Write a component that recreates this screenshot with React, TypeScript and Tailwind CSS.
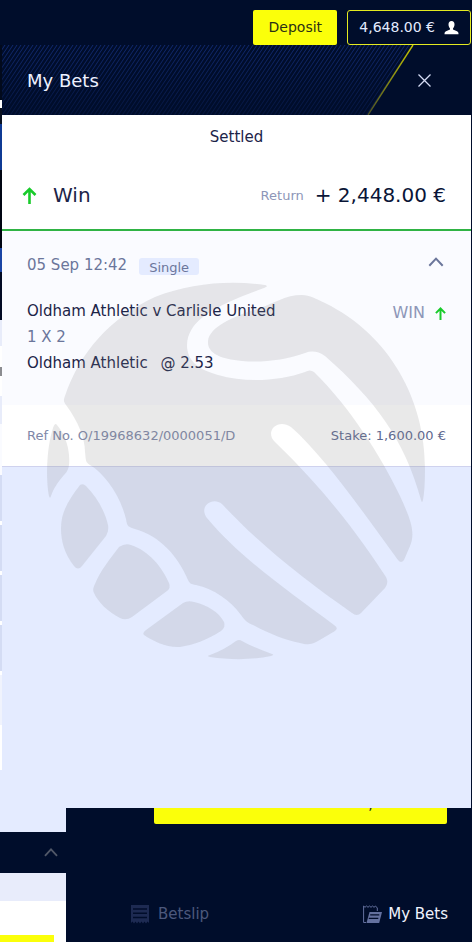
import { ReactNode } from 'react'

interface StripBlock {
  height: string
  color: string
}

// Page content that peeks out left of the drawer
const STRIP_BLOCKS: StripBlock[] = [
  { height: 'h-[55px]', color: 'bg-[#020a1c]' },
  { height: 'h-[8px]', color: 'bg-white' },
  { height: 'h-[16px]', color: 'bg-[#0b1220]' },
  { height: 'h-[46px]', color: 'bg-[#0f3a94]' },
  { height: 'h-[78px]', color: 'bg-[#000512]' },
  { height: 'h-[24px]', color: 'bg-[#1a45a5]' },
  { height: 'h-[48px]', color: 'bg-[#020a24]' },
  { height: 'h-[26px]', color: 'bg-[#e8ecfa]' },
  { height: 'h-[21px]', color: 'bg-white' },
  { height: 'h-[9px]', color: 'bg-[#8b8c90]' },
  { height: 'h-[20px]', color: 'bg-white' },
  { height: 'h-[28px]', color: 'bg-[#e8ecfa]' },
  { height: 'h-[51px]', color: 'bg-[#fafbff]' },
  { height: 'h-[50px]', color: 'border-b-4 border-white bg-[#d4dcf4]' },
  { height: 'h-[50px]', color: 'border-b-4 border-white bg-[#d4dcf4]' },
  { height: 'h-[50px]', color: 'border-b-4 border-white bg-[#d4dcf4]' },
  { height: 'h-[50px]', color: 'border-b-4 border-white bg-[#d4dcf4]' },
  { height: 'h-[50px]', color: 'bg-[#f0f3fd]' },
  { height: 'h-[45px]', color: 'bg-white' },
]

function UserIcon() {
  return (
    <svg viewBox="0 0 14 14" className="h-[14px] w-[15px]" fill="#fff" aria-hidden="true">
      <path d="M7 0C5 0 4 1.400 4 3.500C4 5.300 4.800 6.700 5.500 7.400V8.600L1.500 10.300C.5 10.800 0 11.600 0 13.200H14C14 11.600 13.500 10.800 12.500 10.300L8.500 8.600V7.400C9.200 6.700 10 5.300 10 3.500C10 1.400 9 0 7 0Z" />
    </svg>
  )
}

function UpArrow({ className }: { className: string }) {
  return (
    <svg viewBox="0 0 14 17" className={className} fill="none" stroke="#19cb2b" strokeWidth="2.6" aria-hidden="true">
      <path d="M7 17V2M1 8L7 2L13 8" />
    </svg>
  )
}

function Chevron({ className }: { className: string }) {
  return (
    <svg viewBox="0 0 15 10" className={className} fill="none" stroke="currentColor" strokeWidth="2" aria-hidden="true">
      <path d="M.8 8.800L7.500 1.600L14.200 8.800" />
    </svg>
  )
}

function BetslipIcon() {
  return (
    <svg viewBox="0 0 18 19" className="h-[19px] w-[18px]" aria-hidden="true">
      <path d="M0 0H18V18L16.500 16.500L15 18.500L13.500 16.500L12 18.500L10.500 16.500L9 18.500L7.500 16.500L6 18.500L4.500 16.500L3 18.500L1.500 16.500L0 18Z" fill="#1d2a52" />
      <path d="M2 4H16M2 8.300H16M2 12.600H16" stroke="#000d2b" strokeWidth="1.5" />
    </svg>
  )
}

function MyBetsIcon() {
  return (
    <svg viewBox="0 0 19 19" className="h-[19px] w-[19px]" fill="none" stroke="#64719f" aria-hidden="true">
      <path d="M3 17.500H.6V1L2 2.300L3.500 1L5 2.300L6.500 1L8 2.300L9.500 1L11 2.300L12.500 1L14.300 3V6" />
      <path d="M6.500 7H19L16.200 18H3.500Z" fill="#64719f" stroke="none" />
      <path d="M7.200 9.800H16.300M5.800 13.300H15.300" stroke="#000d2b" strokeWidth="1.3" />
    </svg>
  )
}

function Watermark() {
  return (
    <svg
      viewBox="46 281 380 380"
      className="pointer-events-none absolute left-[44px] top-[236px] w-[380px]"
      fill="#858584"
      fillOpacity="0.18"
      aria-hidden="true"
    >
      {/* hand */}
      <path d="M265 285C230 280 190 283 155 297C110 318 80 352 65 396C63 401 64 402 66 405C78 421 85 438 85 452C86 460 85 462 90 465C105 474 120 495 126 519C127 526 128 527 135 529C160 536 178 556 188 580C190 584 191 584 196 585C214 589 230 600 241 615C245 621 248 623 253 625C270 634 285 640 300 643C307 645 311 645 318 641L335 631Q339 628 334 625C290 592 240 558 207 518C198 506 213 496 222 504C260 545 305 580 352 613Q357 617 361 613L385 588Q389 583 386 577C360 537 325 490 275 442C264 431 278 418 291 427C325 457 365 515 398 560Q401 564 404 560L410 546C416 532 410 518 400 496C382 458 350 407 314 372Q310 369 305 372C280 381 245 383 218 375C197 369 187 360 187 345C188 322 210 310 238 298C250 293 262 289 266 287Q268 286 265 285Z" />
      {/* thumb */}
      <path d="M302 295C310 295 316 299 325 303C390 335 425 400 425 468Q425 490 423 500Q422 504 421 500C405 440 375 400 325 356Q315 349 305 353C285 360 262 363 242 361C220 359 207 353 208 341C210 326 235 316 260 308C275 303 285 295 302 295Z" />
      <path d="M57 425C64 433 68 444 69 455C70 467 68 471 64 475C57 483 53 490 51 496Q50 499 49 496C46 480 46 450 53 428Q55 422 57 425Z" />
      <path d="M80 485Q83 483 86 486C96 496 105 511 108 525Q109 531 106 536L82 566Q78 571 74 566C64 553 61 541 61 528C61 511 70 498 80 485Z" />
      <path d="M119 547Q125 543 131 545C149 551 162 567 169 583Q171 588 167 591L132 617Q126 621 120 618C108 612 98 602 94 593Q92 589 95 584C100 571 110 559 119 547Z" />
      <path d="M183 603Q188 600 194 602C207 605 219 612 224 622Q226 627 221 631C207 640 193 645 180 647C167 648 153 641 144 635Q142 633 146 630Z" />
      <path d="M236 641Q239 639 242 641C253 647 262 650 272 654Q275 655 271 656C253 660 230 660 210 657Q206 656 210 655Q224 650 236 641Z" />
    </svg>
  )
}

function NavButton({ icon, label, className }: { icon: ReactNode; label: string; className: string }) {
  return (
    <button className={`flex items-center text-[15px] leading-5 ${className}`}>
      {icon}
      {label}
    </button>
  )
}

export default function App() {
  return (
    <div className="flex min-h-screen flex-col bg-[#000d2b] font-['DejaVu_Sans',sans-serif] text-[#1c2448]">
      {/* Account bar */}
      <header className="flex justify-end gap-[10px] pt-[10px] pr-px">
        <button className="h-[35px] w-[84px] rounded-[2px] bg-[#fbff0a] text-[14px] text-[#2b3015]">Deposit</button>
        <button className="flex h-[35px] items-center gap-[9px] rounded-[3px] border border-[#e4ea20] px-[11px] text-[14px] text-[#e4ebff]">
          4,648.00 €
          <UserIcon />
        </button>
      </header>

      <div className="flex flex-1 pr-px">
        <div className="flex w-[2px] flex-col overflow-hidden bg-[#e4ebff]">
          {STRIP_BLOCKS.map((block, i) => (
            <div key={i} className={`shrink-0 ${block.height} ${block.color}`} />
          ))}
        </div>

        {/* My Bets drawer */}
        <main className="relative flex min-w-0 flex-1 flex-col bg-[#e4ebff]">
          <div className="relative flex h-[70px] items-center justify-between overflow-hidden bg-[#000d2b] pr-[40px] pl-[25px]">
            <svg className="absolute inset-y-0 right-0 h-[70px] w-[470px]" viewBox="0 0 470 70" aria-hidden="true">
              <defs>
                <pattern id="stripes" width="4" height="6" patternUnits="userSpaceOnUse">
                  <path d="M-1 7.500L5 -1.500M-5 7.500L1 -1.500M3 7.500L9 -1.500" stroke="#14307f" strokeWidth="1" />
                </pattern>
                <linearGradient id="fade" x1="0" y1="0" x2="0" y2="1">
                  <stop offset="0" stopColor="#000d2b" stopOpacity="0.2" />
                  <stop offset="1" stopColor="#000d2b" stopOpacity="0.75" />
                </linearGradient>
                <linearGradient id="edge" x1="0" y1="0" x2="0" y2="1">
                  <stop offset="0" stopColor="#c9c800" />
                  <stop offset="1" stopColor="#4a5026" />
                </linearGradient>
              </defs>
              <path d="M0 0H411L366 70H0Z" fill="url(#stripes)" />
              <path d="M0 0H411L366 70H0Z" fill="url(#fade)" />
              <path d="M412 0L367 70" stroke="url(#edge)" strokeWidth="1.4" />
            </svg>
            <h1 className="relative text-[18px] text-[#eef2ff]">My Bets</h1>
            <button aria-label="Close" className="relative text-[#d5dcf5]">
              <svg viewBox="0 0 13 13" className="h-[13px] w-[13px]" fill="none" stroke="currentColor" strokeWidth="1.3" aria-hidden="true">
                <path d="M.5 .5L12.500 12.500M12.500 .5L.5 12.500" />
              </svg>
            </button>
          </div>

          <section className="border-b-2 border-[#2fb344] bg-white">
            <h2 className="pt-3 text-center text-[15px] leading-5">Settled</h2>
            <div className="flex h-[82px] items-center pt-[14px] pr-[25px] pl-[20px]">
              <UpArrow className="mr-4 h-[17px] w-[15px]" />
              <span className="text-[20px]">Win</span>
              <span className="ml-auto pt-[2px] text-[13px] text-[#8d96b8]">Return</span>
              <span className="ml-[11px] text-[20px] text-[#0a1537]">+ 2,448.00 €</span>
            </div>
          </section>

          <section className="h-[174px] bg-[#fafbff] pt-6 pr-[25px] pl-[25px]">
            <div className="flex items-start">
              <span className="text-[15px] leading-5 text-[#6b769b]">05 Sep 12:42</span>
              <span className="mt-[3px] ml-[12px] h-[17px] rounded-[3px] bg-[#e4ebff] px-[10px] text-[13px] leading-5 text-[#6b769b]">Single</span>
              <button aria-label="Collapse" className="mt-[2px] ml-auto text-[#6b769b]">
                <Chevron className="h-[10px] w-[20px]" />
              </button>
            </div>
            <div className="mt-[23px] flex justify-between text-[15px] leading-[26px]">
              <div>
                <p>Oldham Athletic v Carlisle United</p>
                <p className="text-[#6b769b]">1 X 2</p>
                <p>
                  Oldham Athletic <span className="ml-2">@ 2.53</span>
                </p>
              </div>
              <div className="flex h-[30px] items-center gap-[10px] text-[16px] text-[#8d96b8]">
                WIN
                <UpArrow className="h-[13px] w-[11px]" />
              </div>
            </div>
          </section>

          <section className="flex h-[62px] items-center justify-between border-b border-[#cfd2ee] bg-white px-[25px] text-[13px]">
            <span className="text-[#8088a8]">Ref No. O/19968632/0000051/D</span>
            <span className="text-[#5f6a90]">Stake: 1,600.00 €</span>
          </section>

          <Watermark />
        </main>
      </div>

      {/* Bottom of the page below the drawer */}
      <div className="flex">
        <div className="flex w-[66px] flex-col bg-white">
          <div className="h-6 bg-[#e4ebff]" />
          <button aria-label="Expand" className="flex h-[41px] items-center justify-end bg-[#000d2b] pr-2 text-[#515868]">
            <Chevron className="h-[9px] w-[14px]" />
          </button>
          <div className="h-7 bg-[#e8ecfb]" />
          <div className="mt-[34px] mr-3 h-[7px] bg-[#fbff0a]" />
        </div>

        <div className="flex-1">
          <div className="mr-[25px] ml-[88px] flex h-4 items-end overflow-hidden rounded-b-[2px]">
            <button className="h-10 w-full bg-[#fbff0a] pl-[140px] text-[14px] text-[#2b3015]">,</button>
          </div>
          <nav className="mt-[80px] mr-[24px] ml-[65px] flex justify-between">
            <NavButton icon={<BetslipIcon />} label="Betslip" className="gap-[9px] text-[#4c587c]" />
            <NavButton icon={<MyBetsIcon />} label="My Bets" className="gap-[6px] text-[#f0f3ff]" />
          </nav>
        </div>
      </div>
    </div>
  )
}
